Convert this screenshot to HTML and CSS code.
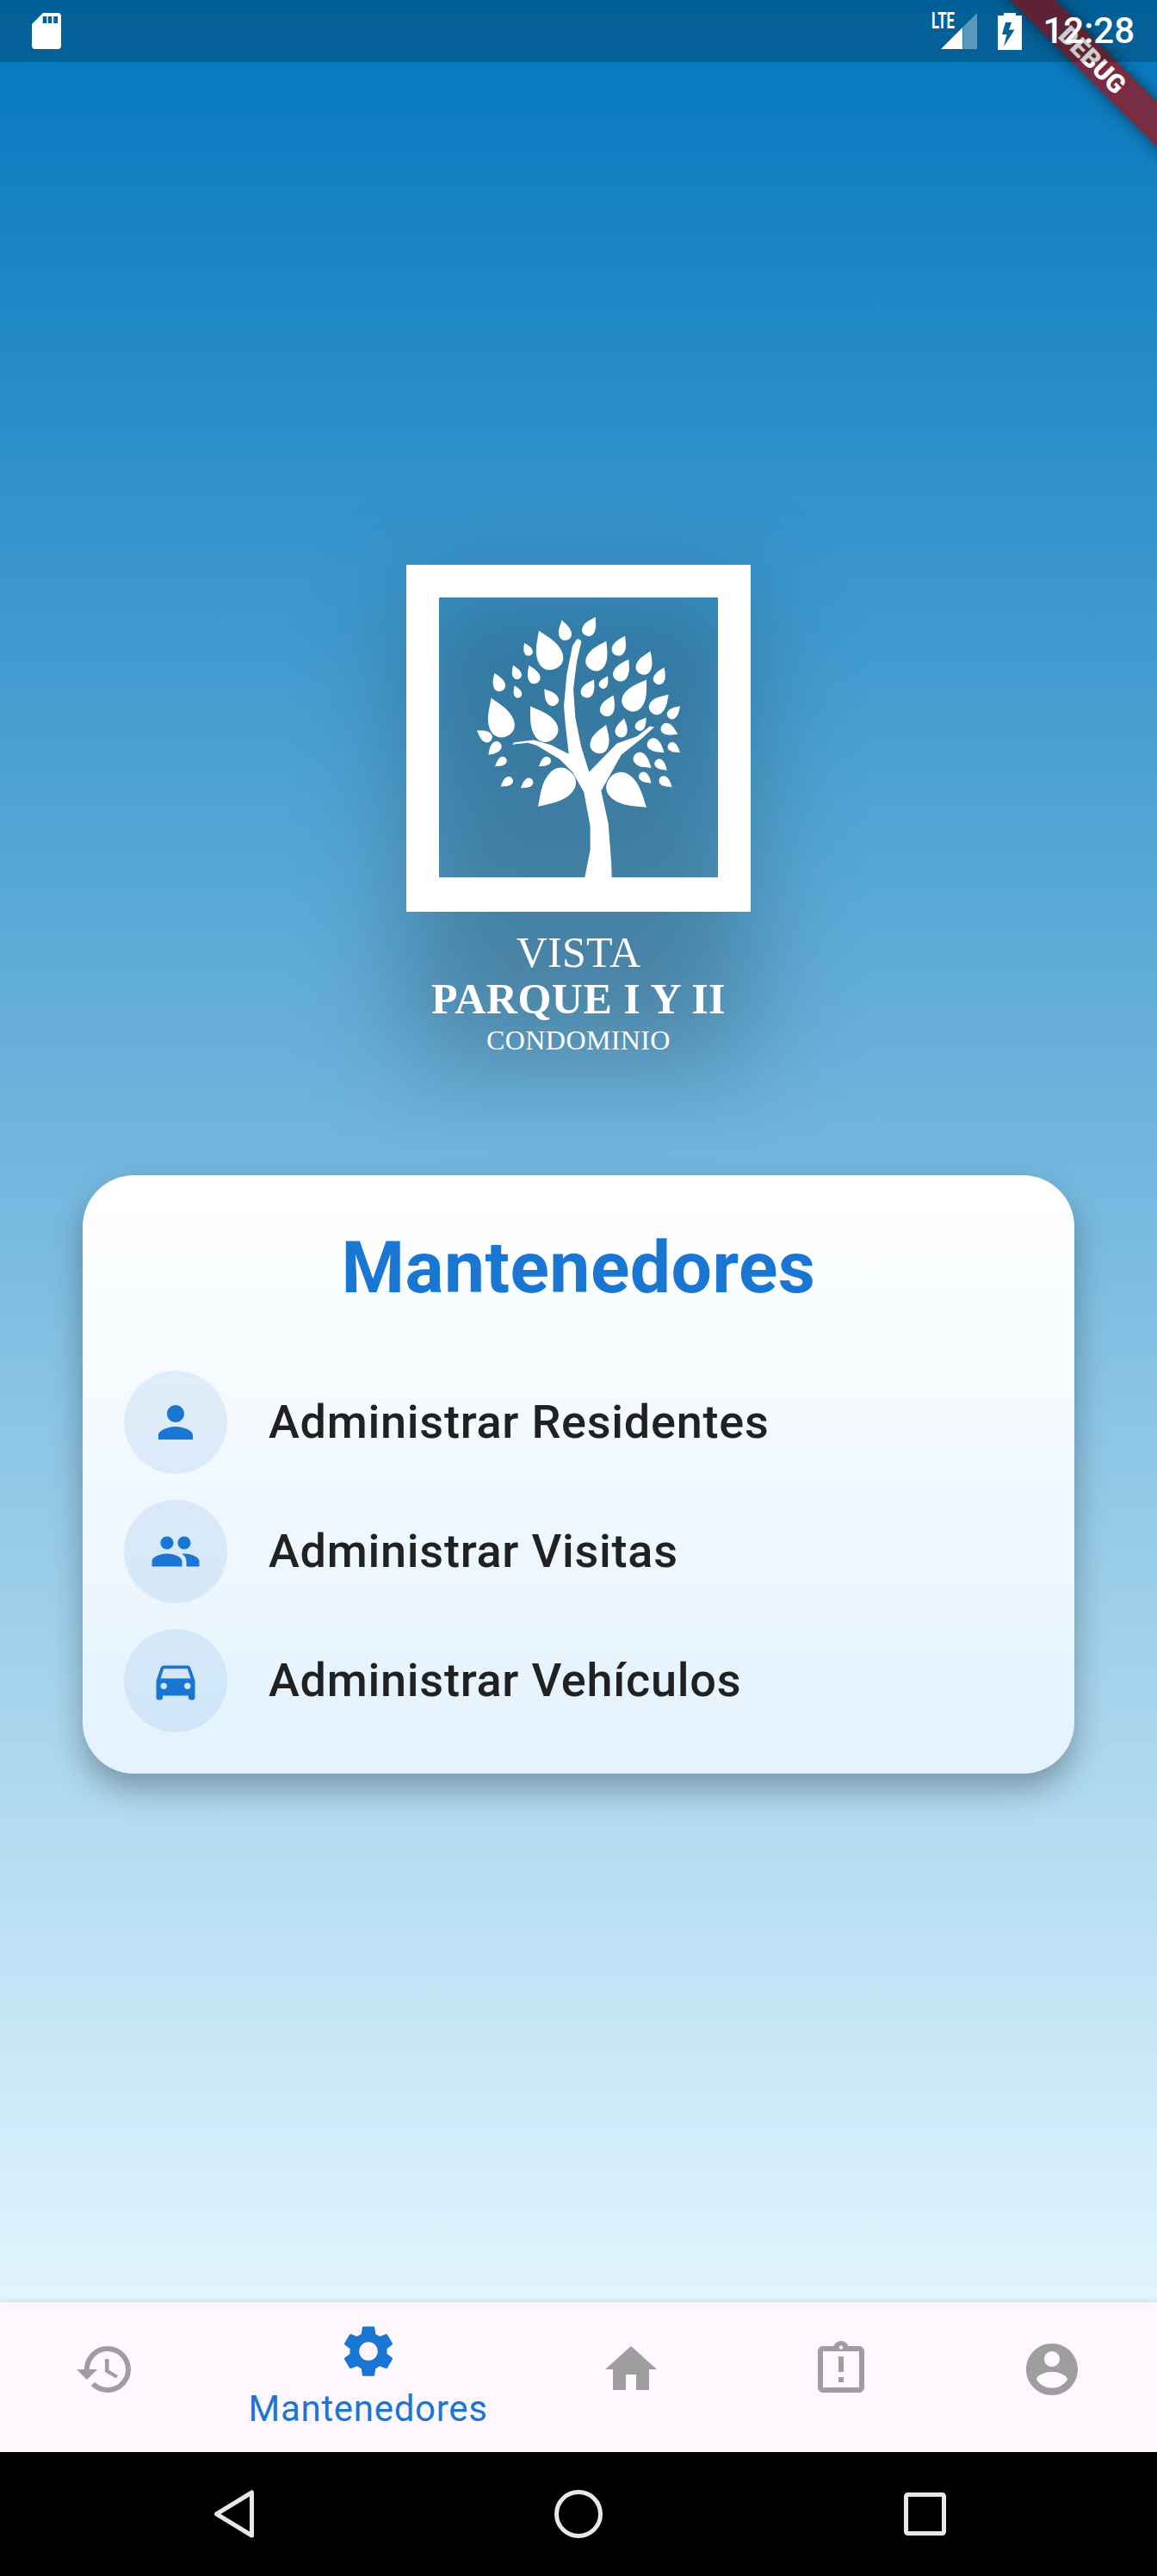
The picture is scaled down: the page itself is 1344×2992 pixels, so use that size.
FILE: index.html
```html
<!DOCTYPE html>
<html lang="es">
<head>
<meta charset="utf-8">
<title>Mantenedores</title>
<link rel="stylesheet" href="styles.css">
</head>
<body>
<div class="app">
  <div class="screen">
    <div class="banner"><span>DEBUG</span></div>
    <header class="status">
      <svg class="sd" viewBox="0 0 34 42"><path fill="#fff" fill-rule="evenodd" d="M13 0H30a4 4 0 0 1 4 4V38a4 4 0 0 1-4 4H4a4 4 0 0 1-4-4V13ZM12.700 4V12H17.300V4ZM18.700 4V12H23.300V4ZM25.300 4V12H30V4Z"/></svg>
      <div class="status-right">
        <svg class="signal" viewBox="0 0 53 42">
          <text class="lte" x="0" y="18" textLength="27" lengthAdjust="spacingAndGlyphs">LTE</text>
          <path fill="#fff" d="M11 42L36 17V42Z"/>
          <path fill="#fff" fill-opacity=".35" d="M36.500 16.500L53 0V42H36.500Z"/>
        </svg>
        <svg class="battery" viewBox="0 0 28 43"><path fill="#fff" fill-rule="evenodd" d="M7 3V0H21V3H28V43H0V3ZM16 11L9 11L5 25H10.500L7 39L19.500 19.500H13Z"/></svg>
        <span class="time">12:28</span>
      </div>
    </header>
    <main class="content">
      <section class="logo">
        <div class="logo-glow"></div>
        <div class="logo-frame">
          <svg class="tree" viewBox="-90 -18 972 974">
            <defs>
              <path id="leaf" d="M0 0C.2-.2.42-.5.68-.5C.88-.5 1-.3 1 0C1 .3.88.5.68.5C.42.5.2.2 0 0Z"/>
            </defs>
            <g fill="#fff">
              <path d="M390 127Q398 122 406 135L390 205L378 300L385 400L405 500L433 590L530 490L600 465L645 430L660 433L620 470L545 530L475 655L500 770L510 900L512 957H418L437 860L437 780L415 660L375 590L330 545L250 497L220 488L165 494L172 486L240 478L300 495L362 527L350 420L345 360L355 250L375 150Z"/>
              <use href="#leaf" transform="matrix(17 70 -43.400 10.500 338 60)"/>
              <use href="#leaf" transform="matrix(-35 63 -39 -21.700 455 50)"/>
              <use href="#leaf" transform="matrix(57 133 -82.500 35.300 258 97)"/>
              <use href="#leaf" transform="matrix(21 43 -26.700 13 207 140)"/>
              <use href="#leaf" transform="matrix(-53 100 -62 -32.900 493 133)"/>
              <use href="#leaf" transform="matrix(-33 67 -41.500 -20.500 558 115)"/>
              <use href="#leaf" transform="matrix(-35 80 -49.600 -21.700 647 168)"/>
              <use href="#leaf" transform="matrix(-41 73 -45.300 -25.400 571 197)"/>
              <use href="#leaf" transform="matrix(-27 58 -36 -16.700 695 225)"/>
              <use href="#leaf" transform="matrix(20 47 -29.100 12.400 168 218)"/>
              <use href="#leaf" transform="matrix(27 62 -38.400 16.700 223 218)"/>
              <use href="#leaf" transform="matrix(25 62 -38.400 15.500 103 245)"/>
              <use href="#leaf" transform="matrix(17 42 -26 10.500 173 288)"/>
              <use href="#leaf" transform="matrix(-35 61 -37.800 -21.700 450 267)"/>
              <use href="#leaf" transform="matrix(-23 42 -26 -14.300 498 255)"/>
              <use href="#leaf" transform="matrix(41 55 -34.100 25.400 277 300)"/>
              <use href="#leaf" transform="matrix(-68 104 -64.500 -42.200 633 268)"/>
              <use href="#leaf" transform="matrix(-60 62 -38.400 -37.200 710 320)"/>
              <use href="#leaf" transform="matrix(-33 71 -44 -20.500 518 322)"/>
              <use href="#leaf" transform="matrix(-40 40 -24.800 -24.800 750 360)"/>
              <use href="#leaf" transform="matrix(53 133 -82.500 32.900 92 332)"/>
              <use href="#leaf" transform="matrix(77 117 -72.500 47.700 228 360)"/>
              <use href="#leaf" transform="matrix(50 33 -20.500 31 42 445)"/>
              <use href="#leaf" transform="matrix(-34 98 -60.800 -21 492 425)"/>
              <use href="#leaf" transform="matrix(-15 66 -40.900 -9.300 555 402)"/>
              <use href="#leaf" transform="matrix(-32 43 -26.700 -19.800 632 400)"/>
              <use href="#leaf" transform="matrix(-57 -28 17.400 -35.300 742 458)"/>
              <use href="#leaf" transform="matrix(-55 -42 26 -34.100 695 522)"/>
              <use href="#leaf" transform="matrix(-40 -30 18.600 -24.800 750 522)"/>
              <use href="#leaf" transform="matrix(40 -42 26 24.800 82 530)"/>
              <use href="#leaf" transform="matrix(38 -28 17.400 23.600 105 570)"/>
              <use href="#leaf" transform="matrix(39 -28 17.400 24.200 258 570)"/>
              <use href="#leaf" transform="matrix(-58 -45 27.900 -36 650 575)"/>
              <use href="#leaf" transform="matrix(-40 -33 20.500 -24.800 705 583)"/>
              <use href="#leaf" transform="matrix(40 -28 17.400 24.800 125 640)"/>
              <use href="#leaf" transform="matrix(40 -28 17.400 24.800 195 645)"/>
              <use href="#leaf" transform="matrix(-40 -33 20.500 -24.800 650 628)"/>
              <use href="#leaf" transform="matrix(-42 -32 19.800 -26 722 642)"/>
              <use href="#leaf" transform="matrix(115 -120 74.400 71.300 255 710)"/>
              <use href="#leaf" transform="matrix(-128 -103 63.900 -79.400 633 713)"/>
            </g>
          </svg>
        </div>
        <div class="logo-text">
          <div class="logo-vista">VISTA</div>
          <div class="logo-parque">PARQUE I Y II</div>
          <div class="logo-cond">CONDOMINIO</div>
        </div>
      </section>
      <section class="card">
        <h1 class="card-title">Mantenedores</h1>
        <div class="rows">
          <div class="row">
            <div class="row-icon"><svg class="icon60" viewBox="0 0 24 24"><path d="M12 12c2.210 0 4-1.790 4-4s-1.790-4-4-4-4 1.790-4 4 1.790 4 4 4zm0 2c-2.670 0-8 1.340-8 4v2h16v-2c0-2.660-5.330-4-8-4z"/></svg></div>
            <span class="row-label">Administrar Residentes</span>
          </div>
          <div class="row">
            <div class="row-icon"><svg class="icon60" viewBox="0 0 24 24"><path d="M16 11c1.660 0 2.990-1.340 2.990-3S17.660 5 16 5c-1.660 0-3 1.340-3 3s1.340 3 3 3zm-8 0c1.660 0 2.990-1.340 2.990-3S9.660 5 8 5C6.340 5 5 6.340 5 8s1.340 3 3 3zm0 2c-2.330 0-7 1.170-7 3.500V19h14v-2.500c0-2.330-4.670-3.500-7-3.500zm8 0c-.29 0-.62.02-.97.05 1.160.84 1.970 1.970 1.970 3.450V19h6v-2.500c0-2.330-4.670-3.500-7-3.500z"/></svg></div>
            <span class="row-label">Administrar Visitas</span>
          </div>
          <div class="row">
            <div class="row-icon"><svg class="icon60" viewBox="0 0 24 24"><path d="M18.920 6.010C18.720 5.420 18.160 5 17.500 5h-11c-.66 0-1.210.42-1.420 1.010L3 12v8c0 .55.45 1 1 1h1c.55 0 1-.45 1-1v-1h12v1c0 .55.45 1 1 1h1c.55 0 1-.45 1-1v-8l-2.080-5.990zM6.500 16c-.83 0-1.500-.67-1.500-1.500S5.670 13 6.500 13s1.500.67 1.500 1.500S7.330 16 6.500 16zm11 0c-.83 0-1.500-.67-1.500-1.500s.67-1.500 1.500-1.500 1.500.67 1.500 1.500-.67 1.500-1.500 1.500zM5 11l1.500-4.500h11L19 11H5z"/></svg></div>
            <span class="row-label">Administrar Vehículos</span>
          </div>
        </div>
      </section>
    </main>
  </div>
  <nav class="nav">
    <div class="tab"><svg class="icon72" viewBox="0 0 24 24"><path d="M13 3c-4.970 0-9 4.030-9 9H1l3.890 3.890.07.14L9 12H6c0-3.870 3.130-7 7-7s7 3.130 7 7-3.130 7-7 7c-1.930 0-3.680-.79-4.940-2.060l-1.420 1.420C8.270 19.990 10.510 21 13 21c4.970 0 9-4.030 9-9s-4.030-9-9-9zm-1 5v5l4.280 2.540.72-1.210-3.500-2.080V8H12z"/></svg></div>
    <div class="tab tab-active"><svg class="icon72" viewBox="0 0 24 24"><path d="M19.140 12.940c.04-.3.06-.61.06-.94 0-.32-.02-.64-.07-.94l2.030-1.580c.18-.14.23-.41.12-.61l-1.920-3.320c-.12-.22-.37-.29-.59-.22l-2.390.96c-.5-.38-1.030-.7-1.620-.94l-.36-2.540c-.04-.24-.24-.41-.48-.41h-3.840c-.24 0-.43.17-.47.41l-.36 2.540c-.59.24-1.130.57-1.620.94l-2.390-.96c-.22-.08-.47 0-.59.22L2.740 8.870c-.12.21-.08.47.12.61l2.030 1.580c-.05.3-.09.63-.09.94s.02.64.07.94l-2.030 1.580c-.18.14-.23.41-.12.61l1.920 3.320c.12.22.37.29.59.22l2.390-.96c.5.38 1.030.7 1.620.94l.36 2.54c.05.24.24.41.48.41h3.840c.24 0 .44-.17.47-.41l.36-2.540c.59-.24 1.130-.56 1.620-.94l2.390.96c.22.08.47 0 .59-.22l1.920-3.320c.12-.22.07-.47-.12-.61l-2.010-1.580zM12 15.600c-1.980 0-3.600-1.620-3.600-3.600s1.620-3.600 3.600-3.600 3.600 1.620 3.600 3.600-1.620 3.600-3.600 3.600z"/></svg><span class="tab-label">Mantenedores</span></div>
    <div class="tab"><svg class="icon72" viewBox="0 0 24 24"><path d="M10 20v-6h4v6h5v-8h3L12 3 2 12h3v8z"/></svg></div>
    <div class="tab"><svg class="icon72" viewBox="0 0 24 24"><path d="M11 15h2v2h-2zm0-8h2v6h-2zm8-4h-4.180C14.400 1.840 13.300 1 12 1c-1.300 0-2.400.84-2.820 2H5c-.14 0-.27.01-.4.04-.39.08-.74.28-1.010.55-.18.18-.33.4-.43.64-.1.23-.16.49-.16.77v14c0 .27.06.54.16.78s.25.45.43.64c.27.27.62.47 1.010.55.13.02.26.03.4.03h14c1.100 0 2-.9 2-2V5c0-1.100-.9-2-2-2zm-7-.25c.41 0 .75.34.75.75s-.34.75-.75.75-.75-.34-.75-.75.34-.75.75-.75zM19 19H5V5h14v14z"/></svg></div>
    <div class="tab"><svg class="icon72" viewBox="0 0 24 24"><path d="M12 2C6.480 2 2 6.480 2 12s4.480 10 10 10 10-4.480 10-10S17.520 2 12 2zm0 3c1.660 0 3 1.340 3 3s-1.340 3-3 3-3-1.340-3-3 1.340-3 3-3zm0 14.200c-2.500 0-4.710-1.280-6-3.220.03-1.990 4-3.080 6-3.080 1.990 0 5.970 1.090 6 3.080-1.290 1.940-3.500 3.220-6 3.220z"/></svg></div>
  </nav>
  <footer class="sysnav">
    <svg class="sys-icon" viewBox="0 0 60 60"><path d="M51.500 5V55L10.500 30Z"/></svg>
    <svg class="sys-icon" viewBox="0 0 60 60"><circle cx="30" cy="30" r="25.500"/></svg>
    <svg class="sys-icon" viewBox="0 0 60 60"><rect x="9.500" y="7.500" width="44" height="45" rx="2"/></svg>
  </footer>
</div>
</body>
</html>
```

FILE: styles.css
```css
* { box-sizing: border-box; }
html, body { margin: 0; padding: 0; }
body { font-family: Roboto, sans-serif; }

.app {
  width: 1344px;
  height: 2992px;
  display: flex;
  flex-direction: column;
  overflow: hidden;
}

.screen {
  flex: 1;
  position: relative;
  overflow: hidden;
  display: flex;
  flex-direction: column;
  background: linear-gradient(180deg, #0277bd 0%, #e1f5fe 100%);
}

.banner {
  position: absolute;
  left: 1069px;
  top: 51px;
  width: 400px;
  height: 37px;
  z-index: 1;
  transform: rotate(45deg);
  background: rgba(146, 25, 35, 0.8);
  box-shadow: 0 0 18px rgba(0, 0, 0, 0.5);
  color: #fff;
  font: 900 30px/37px Roboto, sans-serif;
  text-align: center;
}

.status {
  height: 72px;
  flex: none;
  position: relative;
  z-index: 2;
  display: flex;
  align-items: center;
  justify-content: space-between;
  padding: 0 26px 0 37px;
  background: rgba(0, 0, 0, 0.2);
}
.sd { width: 34px; height: 42px; }
.status-right { display: flex; align-items: center; gap: 24px; }
.signal { width: 53px; height: 42px; overflow: visible; }
.lte { font: 700 25px Roboto, sans-serif; fill: #fff; }
.battery { width: 28px; height: 43px; }
.time { color: #fff; font-size: 42px; font-weight: 500; line-height: 72px; }

.content {
  flex: 1;
  display: flex;
  flex-direction: column;
  align-items: center;
  padding-top: 584px;
}

.logo {
  width: 400px;
  height: 573px;
  position: relative;
  isolation: isolate;
  color: #fff;
  font-family: "Liberation Serif", serif;
  text-align: center;
}
.logo-glow {
  position: absolute;
  inset: 30px 0 -10px 0;
  z-index: -1;
  background: rgba(0, 0, 0, 0.23);
  filter: blur(62px);
}
.logo-frame {
  width: 400px;
  height: 403px;
  border: 38px solid #fff;
  border-bottom-width: 40px;
}
.tree { display: block; width: 324px; height: 325px; }
.logo-text { margin-top: 20px; white-space: nowrap; }
.logo-vista { font-size: 50px; line-height: 54px; letter-spacing: .3px; }
.logo-parque { font-size: 50px; line-height: 54px; font-weight: 700; letter-spacing: .5px; }
.logo-cond { font-size: 32px; line-height: 42px; letter-spacing: .4px; }

.card {
  width: 1152px;
  height: 695px;
  margin-top: 136px;
  padding: 48px;
  border-radius: 60px;
  background: linear-gradient(180deg, #ffffff 0%, #e3f2fd 100%);
  box-shadow: 0 18px 36px rgba(0, 0, 0, 0.3);
}
.card-title {
  margin: 0 0 59px;
  font-size: 84px;
  line-height: 120px;
  font-weight: 700;
  letter-spacing: .5px;
  text-align: center;
  color: #1976d2;
}
.rows { display: flex; flex-direction: column; gap: 30px; }
.row { display: flex; align-items: center; gap: 48px; }
.row-icon {
  width: 120px;
  height: 120px;
  border-radius: 50%;
  display: flex;
  align-items: center;
  justify-content: center;
  background: rgba(25, 118, 210, 0.1);
}
.icon60 { width: 60px; height: 60px; fill: #1976d2; }
.row-label {
  padding-bottom: 2px;
  font-size: 54px;
  font-weight: 500;
  letter-spacing: .75px;
  color: #212121;
}

.nav {
  height: 174px;
  flex: none;
  position: relative;
  display: flex;
  background: #fef7ff;
  box-shadow: 0 -1px 6px rgba(0, 0, 0, 0.12);
}
.tab {
  flex: 2;
  display: flex;
  flex-direction: column;
  align-items: center;
  padding-top: 42px;
  fill: #9e9e9e;
}
.tab-active {
  flex: 3;
  padding-top: 21px;
  fill: #1976d2;
}
.icon72 { width: 72px; height: 72px; display: block; }
.tab-label {
  margin-top: 6px;
  font-size: 42px;
  line-height: 49px;
  letter-spacing: .7px;
  color: #1976d2;
  white-space: nowrap;
}

.sysnav {
  height: 144px;
  flex: none;
  background: #000;
  display: flex;
  align-items: center;
  justify-content: center;
  gap: 341px;
}
.sys-icon {
  width: 60px;
  height: 60px;
  fill: none;
  stroke: #e8e8e8;
  stroke-width: 5;
  stroke-linejoin: round;
}
```
